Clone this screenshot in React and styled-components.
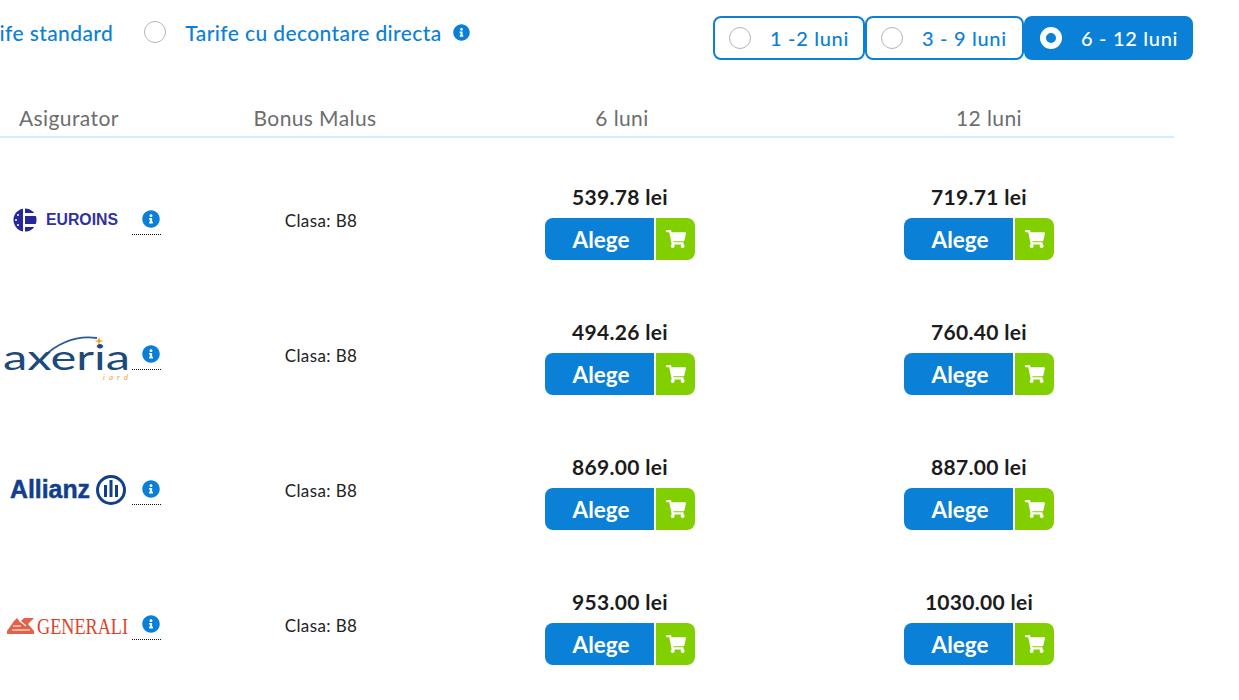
import React from 'react';
import styled, { createGlobalStyle } from 'styled-components';
import { FaInfoCircle, FaShoppingCart } from 'react-icons/fa';

const GlobalStyle = createGlobalStyle`
html, body {
    margin: 0;
    background: #fff;
    font-family: 'Lato', 'Open Sans', sans-serif;
}
`

function EuroinsLogo() {
    return (
        <LogoSvg viewBox="0 0 132 60">
            <circle cx="25" cy="30" r="11.5" fill="#26289a" />
            <rect x="25" y="23" width="12" height="3" fill="#fff" />
            <rect x="25" y="34" width="12" height="3" fill="#fff" />
            <rect x="23" y="18" width="2" height="24" fill="#fff" />
            <circle cx="18" cy="25" r="1" fill="#fff" />
            <circle cx="16" cy="30" r="1" fill="#fff" />
            <circle cx="18" cy="35" r="1" fill="#fff" />
            <text x="46" y="35" textLength="72" lengthAdjust="spacingAndGlyphs" fontFamily="Liberation Sans" fontWeight="700" fontSize="16" fill="#2f319f">EUROINS</text>
        </LogoSvg>
    );
}

function AxeriaLogo() {
    return (
        <LogoSvg viewBox="0 0 132 60">
            <path d="M43 32 C58 18 76 10 97 13" fill="none" stroke="#2a5b92" strokeWidth="1.8" />
            <path d="M99 12 l1.2 3 3.3 1 -3.3 1 -1.2 3 -1.2 -3 -3.3 -1 3.3 -1z" fill="#f0a33c" />
            <text x="3" y="45" textLength="127" lengthAdjust="spacingAndGlyphs" fontFamily="Lato" fontWeight="400" fontSize="35" fill="#1c4a7c">axeria</text>
            <text x="103" y="55" textLength="25" fontFamily="Lato" fontStyle="italic" fontSize="8" fill="#f0a33c">iard</text>
        </LogoSvg>
    );
}

function AllianzLogo() {
    return (
        <LogoSvg viewBox="0 0 132 60">
            <text x="10" y="38" textLength="80" lengthAdjust="spacingAndGlyphs" fontFamily="Liberation Sans" fontWeight="700" fontSize="25" stroke="#123f8c" strokeWidth="0.5" fill="#123f8c">Allianz</text>
            <circle cx="111" cy="30" r="13.5" fill="none" stroke="#123f8c" strokeWidth="3" />
            <path d="M104 25 h3 v12 h-3z M109.5 20 h3 v17 h-3z M115 25 h3 v12 h-3z" fill="#123f8c" />
        </LogoSvg>
    );
}

function GeneraliLogo() {
    return (
        <LogoSvg viewBox="0 0 132 60">
            <path d="M7 36 L14 26 L17 23 L20 27 L24 23 L34 23 L28 29 L34 36 L34 39 L7 39z" fill="#e2614a" />
            <path d="M13 31 h8 M20 26 l6 5 M12 35 h18" stroke="#fff" strokeWidth="1.2" fill="none" />
            <text x="37" y="39" textLength="91" lengthAdjust="spacingAndGlyphs" fontFamily="Liberation Serif" fontSize="24" fill="#d9442b">GENERALI</text>
        </LogoSvg>
    );
}

const offers = [
    { name: 'euroins', Logo: EuroinsLogo, short: '539.78', long: '719.71' },
    { name: 'axeria', Logo: AxeriaLogo, short: '494.26', long: '760.40' },
    { name: 'allianz', Logo: AllianzLogo, short: '869.00', long: '887.00' },
    { name: 'generali', Logo: GeneraliLogo, short: '953.00', long: '1030.00' },
];

function PriceCell({ value }) {
    return (
        <Price>
            <Amount>{value} lei</Amount>
            <BuyGroup>
                <ChooseButton>Alege</ChooseButton>
                <CartButton><FaShoppingCart size={20} /></CartButton>
            </BuyGroup>
        </Price>
    );
}

export default function App() {
    return (
        <Page>
            <GlobalStyle />
            <TopBar>
                <TariffGroup>
                    <Tariff>
                        <Radio />
                        <TariffLabel>Tarife standard</TariffLabel>
                    </Tariff>
                    <Tariff>
                        <Radio />
                        <TariffLabel>Tarife cu decontare directa</TariffLabel>
                        <TariffInfo><FaInfoCircle size={17} /></TariffInfo>
                    </Tariff>
                </TariffGroup>
                <Periods>
                    <Period $width={152}><Radio />1 -2 luni</Period>
                    <Period $width={159}><Radio />3 - 9 luni</Period>
                    <Period $width={169} $active><Radio $active />6 - 12 luni</Period>
                </Periods>
            </TopBar>
            <Table>
                <HeadRow>
                    <HeadFirst>Asigurator</HeadFirst>
                    <HeadCell>Bonus Malus</HeadCell>
                    <HeadCell>6 luni</HeadCell>
                    <HeadCell>12 luni</HeadCell>
                </HeadRow>
                {offers.map(({ name, Logo, short, long }) => (
                    <Row key={name}>
                        <InsurerCell>
                            <Logo />
                            <InfoTip><FaInfoCircle size={18} /></InfoTip>
                        </InsurerCell>
                        <ClassCell>Clasa: B8</ClassCell>
                        <PriceCell value={short} />
                        <PriceCell value={long} />
                    </Row>
                ))}
            </Table>
        </Page>
    );
}

const Page = styled.div`
width: 1239px;
height: 700px;
overflow: hidden;
background: #fff;
`
const TopBar = styled.div`
display: flex;
justify-content: space-between;
align-items: flex-start;
width: 1193px;
padding-top: 16px;
`
const TariffGroup = styled.div`
display: flex;
gap: 31px;
margin-left: -71px;
margin-top: 4px;
`
const Tariff = styled.label`
display: flex;
align-items: center;
gap: 19px;
height: 24px;
`
const TariffLabel = styled.span`
font-size: 21px;
font-weight: 500;
letter-spacing: 0.4px;
color: #0a80d6;
white-space: nowrap;
`
const TariffInfo = styled.span`
display: flex;
color: #0a7fd8;
margin-left: -8px;
`
const Radio = styled.span`
flex: none;
display: inline-block;
box-sizing: border-box;
width: 22px;
height: 22px;
border-radius: 50%;
border: ${props => props.$active ? '6px solid #fff' : '1px solid #b5b5b5'};
background: ${props => props.$active ? '#0a80d6' : '#fff'};
`
const Periods = styled.div`
display: flex;
`
const Period = styled.div`
box-sizing: border-box;
display: flex;
align-items: center;
gap: 19px;
width: ${props => props.$width}px;
height: 44px;
padding-left: 14px;
border: 2px solid #0a80d6;
border-radius: 8px;
font-size: 20px;
font-weight: 500;
letter-spacing: 0.7px;
white-space: nowrap;
color: ${props => props.$active ? '#fff' : '#0a80d6'};
background: ${props => props.$active ? '#0a80d6' : '#fff'};
`
const Table = styled.div`
width: 1174px;
margin-top: 42px;
`
const HeadRow = styled.div`
box-sizing: border-box;
display: grid;
grid-template-columns: 190px 250px 364px 370px;
align-items: start;
height: 36px;
border-bottom: 2px solid #d3ecff;
font-size: 21px;
line-height: 32px;
letter-spacing: 0.4px;
color: #6d6d6d;
`
const HeadFirst = styled.div`
padding-left: 19px;
`
const HeadCell = styled.div`
text-align: center;
`
const Row = styled.div`
display: grid;
grid-template-columns: 190px 262px 336px 382px;
align-items: start;
box-sizing: border-box;
height: 135px;
padding-top: 47px;
`
const InsurerCell = styled.div`
display: flex;
align-items: flex-start;
height: 60px;
padding-top: 5px;
`
const LogoSvg = styled.svg`
flex: none;
width: 132px;
height: 60px;
`
const InfoTip = styled.span`
box-sizing: border-box;
display: flex;
justify-content: flex-end;
align-items: flex-start;
width: 29px;
height: 45px;
padding: 20px 1px 0 0;
border-bottom: 1px dotted #111;
color: #0a7fd8;
`
const ClassCell = styled.div`
padding-top: 26px;
font-size: 17px;
line-height: 20px;
letter-spacing: 0.4px;
color: #222;
text-align: center;
`
const Price = styled.div`
display: flex;
flex-direction: column;
align-items: center;
gap: 9px;
`
const Amount = styled.div`
font-size: 21px;
line-height: 24px;
font-weight: 700;
letter-spacing: 0.3px;
color: #1c1c1c;
white-space: nowrap;
`
const BuyGroup = styled.div`
display: flex;
gap: 2px;
height: 42px;
`
const ChooseButton = styled.button`
width: 109px;
border: none;
border-radius: 8px 0 0 8px;
background: #0a80d6;
color: #fff;
font-family: inherit;
font-size: 22.5px;
font-weight: 700;
padding: 0 0 0 3px;
`
const CartButton = styled.button`
display: flex;
align-items: center;
justify-content: center;
width: 39px;
border: none;
border-radius: 0 8px 8px 0;
background: #82cf00;
color: #fff;
padding: 0;
`
